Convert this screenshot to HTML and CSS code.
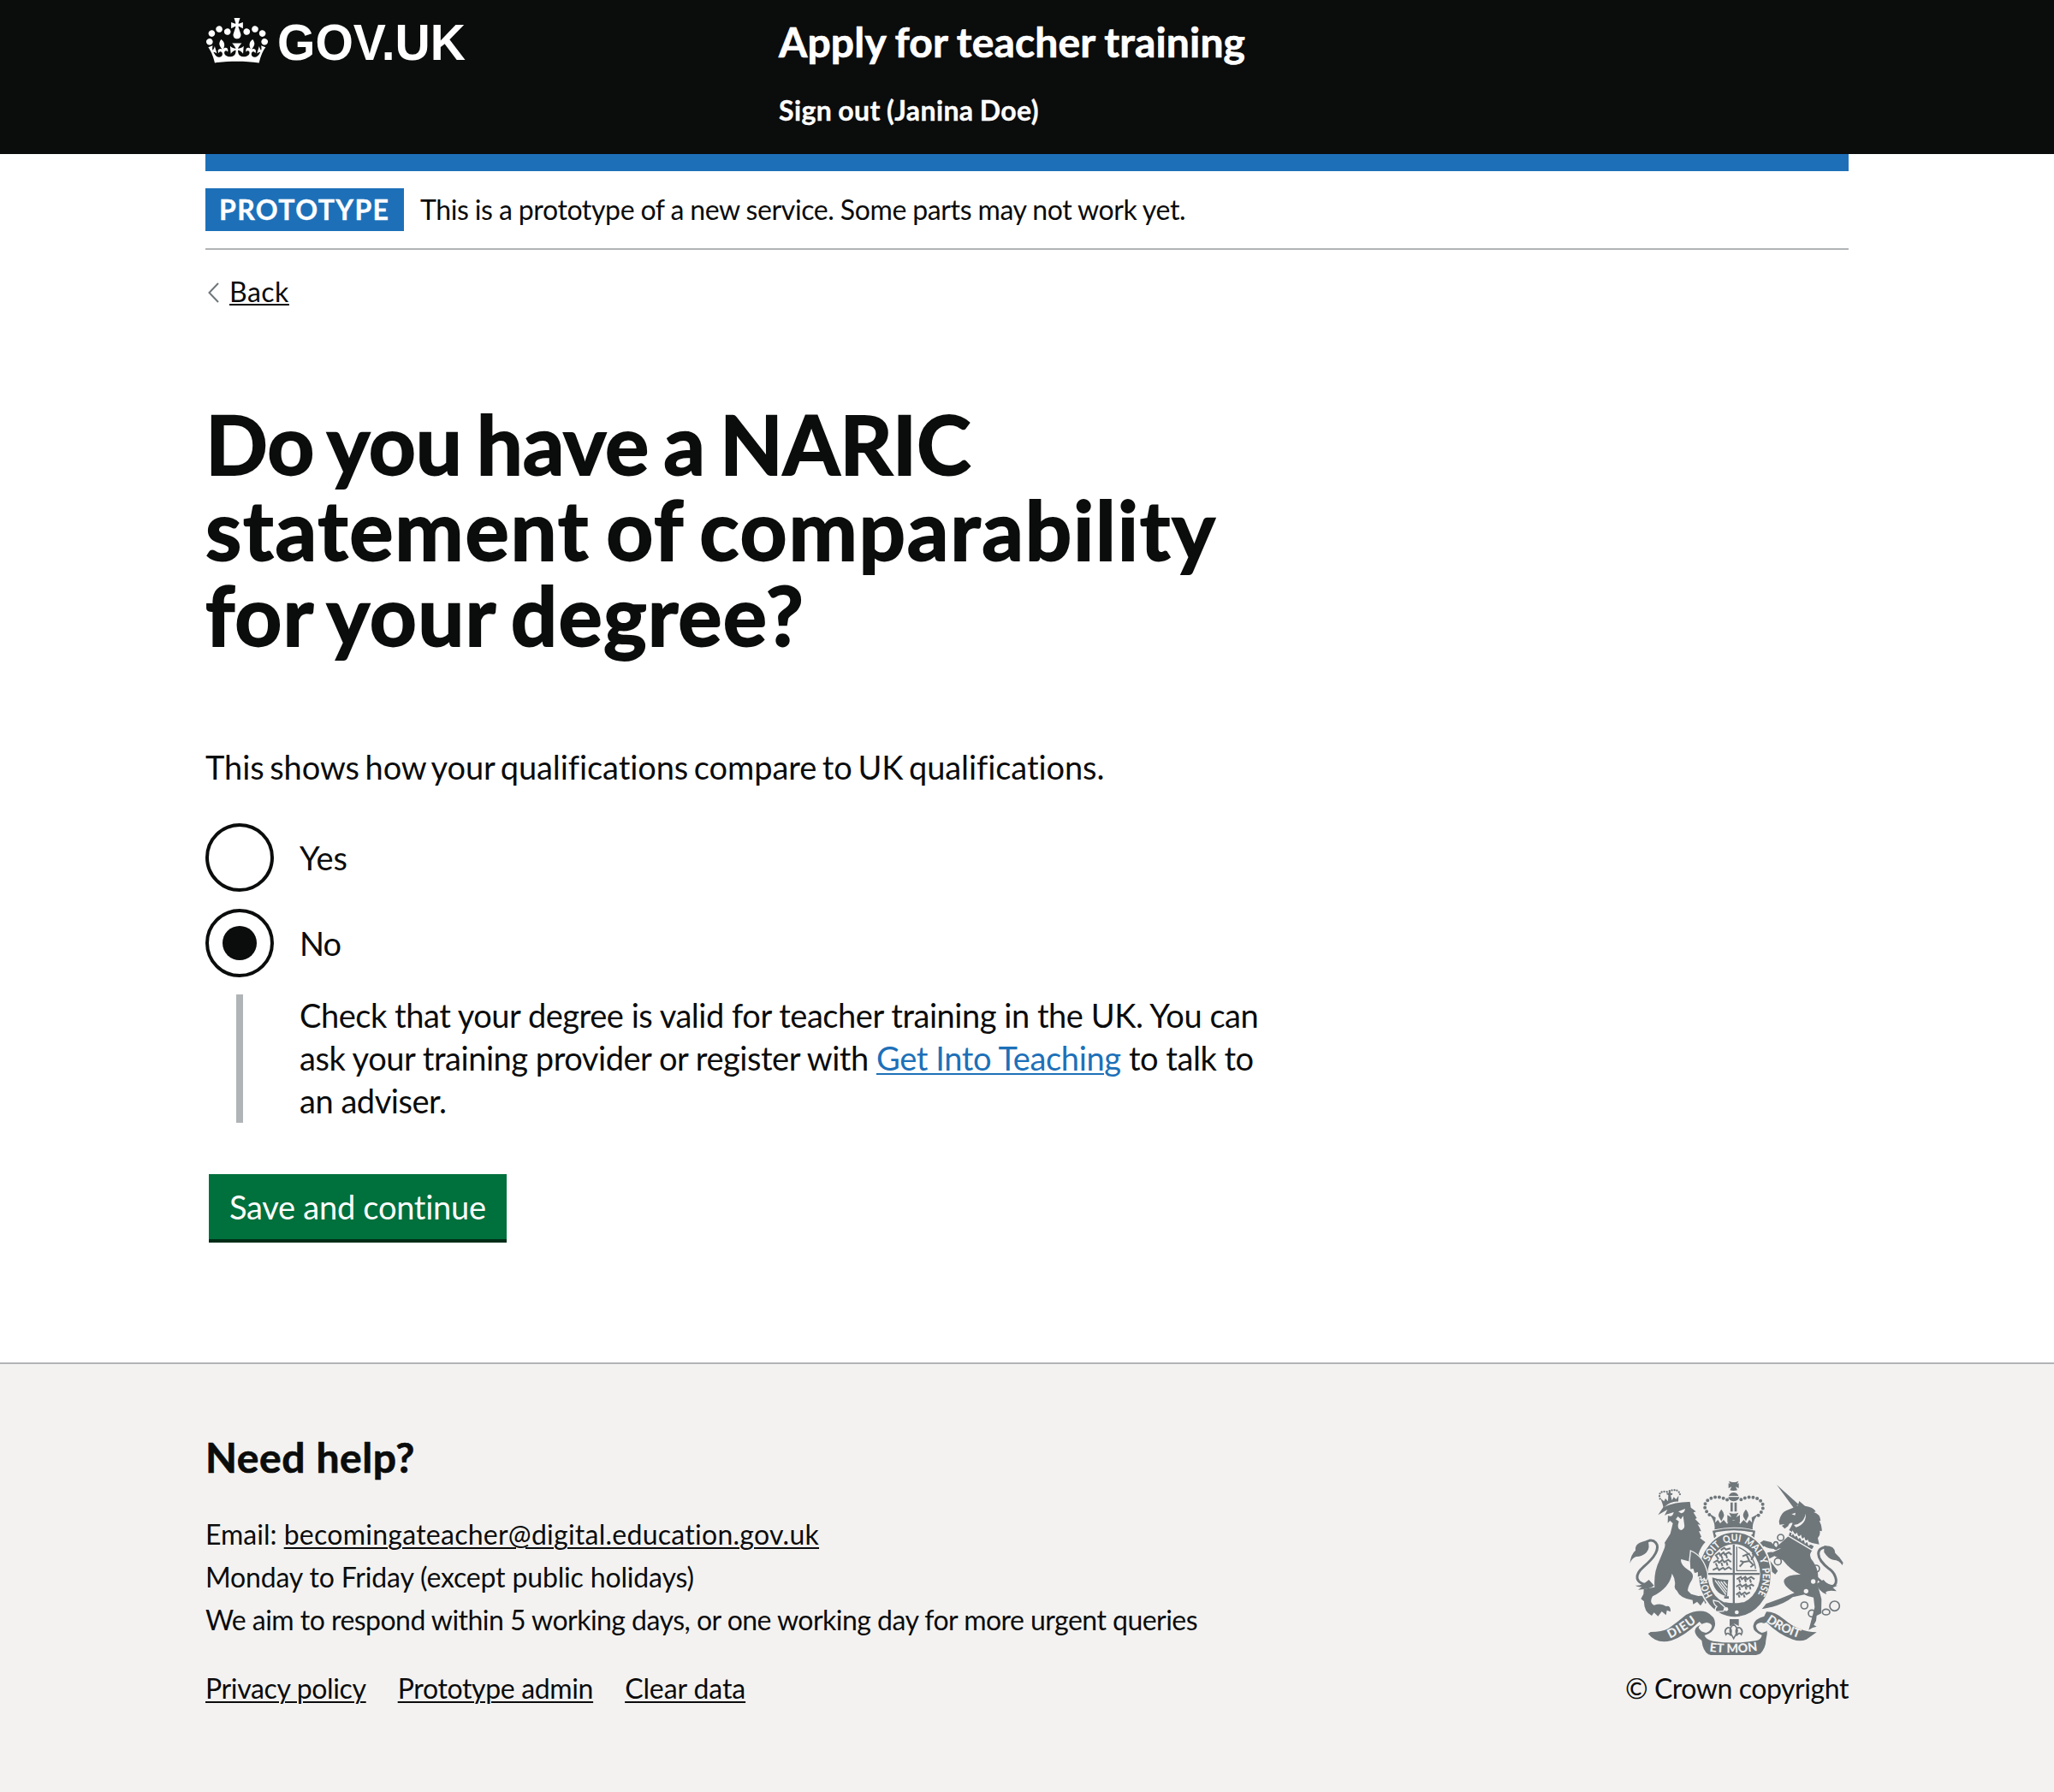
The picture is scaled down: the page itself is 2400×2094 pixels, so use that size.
FILE: index.html
```html
<!DOCTYPE html>
<html lang="en">
<head>
<meta charset="utf-8">
<title>Do you have a NARIC statement of comparability for your degree? - Apply for teacher training - GOV.UK</title>
<link rel="stylesheet" href="styles.css">
</head>
<body>
<header class="header">
  <div class="container header-row">
    <a class="logo" href="#">
      <svg class="crown" viewBox="0 0 132 97" aria-hidden="true"><path fill="currentColor" fill-rule="evenodd" d="M25 30.2c3.5 1.5 7.7-.2 9.1-3.7 1.5-3.6-.2-7.8-3.9-9.2-3.6-1.4-7.6.3-9.1 3.9-1.4 3.5.3 7.5 3.9 9zM9 39.5c3.6 1.5 7.8-.2 9.2-3.7 1.5-3.6-.2-7.8-3.9-9.1-3.6-1.5-7.6.2-9.1 3.8-1.4 3.5.3 7.5 3.8 9zM4.4 57.2c3.5 1.5 7.7-.2 9.1-3.8 1.5-3.6-.2-7.7-3.9-9.1-3.5-1.5-7.6.3-9.1 3.8-1.4 3.5.3 7.6 3.9 9.1zm38.3-21.4c3.5 1.5 7.7-.2 9.1-3.8 1.5-3.6-.2-7.7-3.9-9.1-3.6-1.5-7.6.3-9.1 3.8-1.3 3.6.4 7.7 3.9 9.1zm64.4-5.6c-3.6 1.5-7.8-.2-9.1-3.7-1.5-3.6.2-7.8 3.8-9.2 3.6-1.4 7.7.3 9.2 3.9 1.3 3.5-.4 7.5-3.9 9zm15.9 9.3c-3.6 1.5-7.7-.2-9.1-3.7-1.5-3.6.2-7.8 3.7-9.1 3.6-1.5 7.7.2 9.2 3.8 1.5 3.5-.3 7.5-3.8 9zm4.7 17.7c-3.6 1.5-7.8-.2-9.2-3.8-1.5-3.6.2-7.7 3.9-9.1 3.6-1.5 7.7.3 9.2 3.8 1.3 3.5-.4 7.6-3.9 9.1zM89.3 35.8c-3.6 1.5-7.8-.2-9.2-3.8-1.4-3.6.2-7.7 3.9-9.1 3.6-1.5 7.7.3 9.2 3.8 1.4 3.6-.3 7.7-3.9 9.1zM69.7 17.7l8.9 4.7V9.3l-8.9 2.8c-.2-.3-.5-.6-.9-.9L72.4 0H59.6l3.5 11.2c-.3.3-.6.5-.9.9l-8.8-2.8v13.1l8.8-4.7c.3.3.6.7.9.9l-5 15.4v.1c-.2.8-.4 1.6-.4 2.4 0 4.1 3.1 7.5 7 8.1h.2c.3 0 .7.1 1 .1.4 0 .7 0 1-.1h.2c4-.6 7.1-4.1 7.1-8.1 0-.8-.1-1.7-.4-2.4V34l-5.1-15.4c.4-.2.7-.6 1-.9zM66 92.8c16.9 0 32.8 1.1 47.1 3.2 4-16.9 8.9-26.7 14-33.5l-9.6-3.4c1 4.9 1.1 7.2 0 10.2-1.5-1.4-3-4.3-4.2-8.7L108.6 76c2.8-2 5-3.2 7.5-3.3-4.4 9.4-10 11.9-13.6 11.2-4.3-.8-6.3-4.6-5.6-7.9 1-4.7 5.7-5.9 8-.5 4.3-8.7-3-11.4-7.6-8.8 7.1-7.2 7.9-13.5 2.1-21.1-8 6.1-8.1 12.3-4.5 20.8-4.7-5.4-12.1-2.5-9.5 6.2 3.4-5.2 7.9-2 7.2 3.1-.6 4.3-6.4 7.8-13.5 7.2-10.3-.9-10.9-8-11.2-13.8 2.5-.5 7.1 1.8 11 7.3L80.2 60c-4.1 4.4-8 5.3-12.3 5.4 1.4-4.4 8-11.6 8-11.6H55.5s6.4 7.2 7.9 11.6c-4.2-.1-8-1-12.3-5.4l1.4 16.4c3.9-5.5 8.5-7.7 10.9-7.3-.3 5.8-.9 12.8-11.1 13.8-7.2.6-12.9-2.9-13.5-7.2-.7-5 3.8-8.3 7.1-3.1 2.7-8.7-4.6-11.6-9.4-6.2 3.7-8.5 3.6-14.7-4.6-20.8-5.8 7.6-5 13.9 2.2 21.1-4.7-2.6-11.9.1-7.7 8.8 2.3-5.5 7.1-4.2 8.1.5.7 3.3-1.3 7.1-5.7 7.9-3.5.7-9-1.8-13.5-11.2 2.5.1 4.7 1.3 7.5 3.3l-4.7-15.4c-1.2 4.4-2.7 7.2-4.3 8.7-1.1-3-.9-5.3 0-10.2l-9.5 3.4c5 6.9 9.9 16.7 14 33.5 14.8-2.1 30.8-3.2 47.7-3.2z"/></svg>
      <svg class="wordmark" viewBox="0 0 222 60"><text x="0" y="49" textLength="220" lengthAdjust="spacingAndGlyphs">GOV.UK</text></svg>
    </a>
    <div class="header-content">
      <a class="service-name" href="#">Apply for teacher training</a>
      <a class="sign-out" href="#">Sign out (Janina Doe)</a>
    </div>
  </div>
</header>

<div class="container">
  <div class="phase-banner">
    <strong class="tag">PROTOTYPE</strong>
    <span class="phase-text">This is a prototype of a new service. Some parts may not work yet.</span>
  </div>
  <a class="back" href="#">
    <svg class="chevron" viewBox="0 0 14 24" aria-hidden="true"><path d="M13 1 2.500 12 13 23" fill="none" stroke="#6f777b" stroke-width="2"/></svg>
    <span class="back-text">Back</span>
  </a>

  <main class="main">
    <h1 class="title">
      <span class="title-line title-line-1">Do you have a NARIC</span>
      <span class="title-line title-line-2">statement of comparability</span>
      <span class="title-line title-line-3">for your degree?</span>
    </h1>
    <p class="intro">This shows how your qualifications compare to UK qualifications.</p>
    <div class="radios">
      <label class="radio"><span class="dial"></span><span class="radio-label">Yes</span></label>
      <label class="radio"><span class="dial dial-on"></span><span class="radio-label radio-no">No</span></label>
      <div class="conditional">
        <p class="advice">Check that your degree is valid for teacher training in the UK. You can<br>ask your training provider or register with <a class="link" href="#">Get Into Teaching</a> to talk to<br>an adviser.</p>
      </div>
    </div>
    <button class="button" type="button">Save and continue</button>
  </main>
</div>

<footer class="footer">
  <div class="container footer-row">
    <div class="support">
      <h2 class="help">Need help?</h2>
      <ul class="contact">
        <li>Email: <a class="email" href="#">becomingateacher@digital.education.gov.uk</a></li>
        <li class="hours">Monday to Friday (except public holidays)</li>
        <li class="response">We aim to respond within 5 working days, or one working day for more urgent queries</li>
      </ul>
      <nav class="footer-links"><a href="#">Privacy policy</a><a href="#">Prototype admin</a><a class="clear" href="#">Clear data</a></nav>
    </div>
    <a class="copyright" href="#">
      <svg class="arms" viewBox="42 30 750 612" aria-hidden="true">
        <defs>
          <path id="garter" d="M342 445A98 118 0 1 1 480 445"/>
          <path id="scroll-left" d="M184 584Q236 560 290 516"/>
          <path id="scroll-right" d="M520 524Q578 566 650 586"/>
          <path id="scroll-mid" d="M322 629Q408 640 496 626"/>
        </defs>
        <g class="ink">
          <!-- central crown -->
          <path d="M390 32l12 4h12l10-4-5 11 6-4v18l-11-5 6 12q-14 4-26 0l6-12-11 5V39l6 4zM390 84a18 18 0 0 1 34 0zM388 88h39q-2 13-20 15-17-2-19-15zM396 107h8v32h-8zM410 107h8v32h-8z"/>
          <path d="M364 131q14 17 7 28-7 14-7 14t-8-14q-6-11 8-28zM450 131q14 17 7 28-7 14-7 14t-8-14q-6-11 8-28zM391 143q16 6 33 0l-8 16 13-8v26l-22-8-22 8v-26l14 8z"/>
          <path d="M324 148l20 12-2 18 10-10 8 12 12-12 12 14 8-12h30l8 12 12-14 12 12 8-12 10 10-2-18 22-12q-22 30-18 54-66-16-134 0 4-24-16-52z"/>
          <path d="M333 206q74-18 150 0l-4 26q-8-10-12-9 18-14-4-13-56-10-110 0-18 0-6 14l-8 9z"/>
          <g class="pearls"><path d="M322 150C276 108 338 68 388 100"/><path d="M494 152C540 108 478 68 428 100"/></g>
          <!-- lion -->
          <g class="dots"><path d="M149 94Q140 64 174 70Q216 52 220 84"/></g>
          <path d="M158 113l-7-20 12 10 5-10 9 10 1-22-6-2 1-6 6 1 1-7h6v7l7 0-1 6-6 2 5 18 6-12 8 8 9-13-1 21q-26-2-52 21z"/>
          <path d="M142 151l18-27q44-20 94-19l3 20 18 14-9 3 12 20-6 3 19 20-10-1q8 12 12 24l-8 0 9 19-5 5 19 14q-16 16-24 42l12 26q30 26 22 56l-7 5-6-11-9 10-2-17-14 4 1-16-11 3-5-16-13 2 7-18-36-10q-5 18 26 38 22 12 12 34-14 22-15 38l12 12 25 7q30-3 35 14l-10 14-5-12-12 18-12-14-14 9-2-15q-44-6-55-33-7-4-8-14 6-22-9-46-8 50-68 80-13 22 5 31 25-9 42 4 17-4 16 19l-13-5-3 17-15-13-13 17-14-13-8 11q-28-14-27-50l-11-9 9-17 1-18 38-6q-4-52 17-94l16-39q6-15 2-23l20-31 9-37-10-9-8 8 1-31-12 4 10-20z"/>
          <path class="tail" d="M115 398C55 390 60 360 92 332C130 300 150 268 134 248C122 234 105 240 94 252"/>
          <path d="M43 321q4-33 20-46-4-28 43-34 10 26-5 42-14 14-36 14-16 6-22 24zM62 398q20 4 48-20l18 20q-10 12-56 15l14-10q-14 2-24-5z"/>
          <!-- unicorn -->
          <path d="M558 45l76 68-15 15zM632 118l5-16 20 17q30 4 38 20l-7 2q22 6 24 30l-5 1q11 16 9 36l-7-2q3 16-7 26l5 22q-52-6-106-50 8-12 13-25-12-3-16 11l-12 9-10-10 10-6-18 2-2-12q6-30 26-38 14-4 40-17z"/>
          <path d="M600 224l84 50q-14 12-6 30 34 42 22 88 10 34 15 54l-1 50-16 8-2 18-8 14 10 6-14 4-14 8 12-44 9-36-4-34q-20-2-32-10l-41 9q-30 24-72 34l-36 8 15-19q48-16 99-38-42-26-36-46 12-20 58-18-36-16-62-50l-30-15-20 10 32 42-9 12-26-20-16-38q8-24 34-20 14-6 29-13-36 6-60-8l-14 8-6-16 18-12 26 6 18 18z"/>
          <path class="tail" d="M700 372C770 440 785 370 742 340C690 300 697 266 731 263"/>
          <path d="M724 259q38-2 39 25 18 16 28 34l-3 9q-10-18-32-19-18-4-32-27zM697 392l25-14q16 22 50 20-10 6-20 5l16 15q-28-5-38 3l2 8q-26-10-35-37z"/>
          <g class="chain"><ellipse cx="572" cy="230" rx="11" ry="11"/><ellipse cx="555" cy="258" rx="8" ry="13"/><circle cx="562" cy="314" r="12"/><circle cx="696" cy="339" r="12"/><circle cx="655" cy="468" r="12"/><circle cx="681" cy="496" r="12"/><ellipse cx="731" cy="491" rx="13" ry="10"/><circle cx="761" cy="470" r="17"/></g>
          <!-- garter and motto scroll -->
          <ellipse class="edge" cx="411" cy="360" rx="128" ry="150"/>
          <path d="M393 516h32v24l-16-8-16 10z"/>
          <path d="M116 561q40 0 62-12 34-24 62-48 40-20 72-10 36 18 29 50-6 24-36 32 4 14 29 20 76 12 150-1 20-4 22-20-34-12-30-34 4-24 38-32l8-16q30 0 64 28 48 42 112 44l-36 25q-22 9-48 0-50-18-92-60l-10 4q14 14 12 38-2 10-4 22 0 24-19 46-30 12-92 12-60 0-90-9-20-12-24-49-24-18-24-34 2-16 26-22l-10-10q-54 52-98 66-52 14-82-24z"/>
        </g>
        <g class="lily"><path d="M407 534q-20 18-9 34l9 16 9-16q11-16-9-34zM398 566q4-22-12-20-14 8-6 24 6-10 18 4M416 566q-4-22 12-20 14 8 6 24-6-10-18 4"/></g>
        <g class="paper">
          <ellipse cx="408" cy="359" rx="92" ry="106"/>
          <path d="M169 150l28-9q-4 18-18 13zM213 139l24-10q-2 15-14 16zM204 166l8-10 10 10 8-12 4 30q3 15-10 20-13-2-12-18l3-13z"/>
          <path d="M610 148l14-5-2 9zM660 146q-8 36-42 40l8 8q36-12 34-48z"/>
          <path d="M284 546q4-13 28-18 16 2 19 12-3 18-21 24-18-2-26-18zM532 546q-4-13-28-18-16 2-19 12 3 18 21 24 18-2 26-18z"/>
          <circle cx="381" cy="481" r="7"/><circle cx="418" cy="492" r="7"/><circle cx="661" cy="418" r="8"/><circle cx="686" cy="384" r="8"/>
        </g>
        <path class="collar" d="M603 208l88 52-9 14-84-50zM610 222l4-12 8 14 6-8 6 16 8-8 4 16 8-8 4 16 8-8 4 16 8-4"/>
        <path class="buckle" d="M336 450l18 4 22 20-4 14-26 2q-8-8 2-18-12-8-12-22z"/>
        <g class="ink">
          <path d="M404 254h7v208h-7zM317 354h181v7H317z"/>
          <path d="M332 370q26 10 56 8l-4 58q-50-10-52-66zM374 436h16v8h-16zM374 456q34 8 70 0l-16 14q-24 4-42-4z"/>
        </g>
        <g class="details">
          <path d="M342 294l14-10 4 8 12-10 4 8 14-8 10 8M346 294l8 12M362 290l6 14M380 288l4 14M336 318l14-8 6 8 12-10 6 8 14-8 10 8M344 320l6 12M364 318l4 12M382 316l4 12M334 344l16-8 6 8 14-8 6 6 14-8 10 8M362 274l12-8 6 6 16-4"/>
          <path d="M418 376l14-8 4 8 12-8 6 8 14-8 12 8M426 376l4 12M446 374l4 12M464 376l4 12M416 402l14-8 6 8 14-8 6 8 14-8 8 6M426 402l4 12M448 400l4 12M464 402l2 10M416 430l12-8 6 8 12-8 6 6 12-6M424 430l4 10M442 430l4 10"/>
          <path d="M428 332l14-16-12-4M442 316l20-4 14 14-10 8M462 312l-10-22-14 6M452 290l12-4M468 308q14-14 4-24"/>
          <path class="frame" d="M418 262v84h70M424 264q54 24 60 76"/>
        </g>
        <g class="strings"><path d="M342 380l38 50M352 382l30 40M362 384l22 28M372 384l12 14"/></g>
        <g class="motto">
          <text><textPath href="#garter" startOffset="14" textLength="68" lengthAdjust="spacingAndGlyphs">HON</textPath></text>
          <text><textPath href="#garter" startOffset="138" textLength="70" lengthAdjust="spacingAndGlyphs">SOIT</textPath></text>
          <text><textPath href="#garter" startOffset="222" textLength="58" lengthAdjust="spacingAndGlyphs">QUI</textPath></text>
          <text><textPath href="#garter" startOffset="293" textLength="68" lengthAdjust="spacingAndGlyphs">MAL</textPath></text>
          <text><textPath href="#garter" startOffset="370">Y</textPath></text>
          <text><textPath href="#garter" startOffset="406" textLength="94" lengthAdjust="spacingAndGlyphs">PENSE</textPath></text>
          <text class="large"><textPath href="#scroll-left" textLength="110">DIEU</textPath></text>
          <text class="large"><textPath href="#scroll-mid" textLength="170">ET MON</textPath></text>
          <text class="large"><textPath href="#scroll-right" textLength="130">DROIT</textPath></text>
        </g>
        <!-- lion's forepaw resting on the garter -->
        <path class="paw" d="M256 276q46 18 60 80l0 16-6 12-6-11-10 8-2-15-13 4 1-16-11 3-5-16-10 2-2-30z"/>
      </svg>
      <span class="copyright-text">© Crown copyright</span>
    </a>
  </div>
</footer>
</body>
</html>
```

FILE: styles.css
```css
* { box-sizing: border-box; }
body { margin: 0; background: #fff; color: #0b0c0c; font-family: Lato, "Liberation Sans", sans-serif; font-size: 38px; line-height: 50px; }
a { color: inherit; text-decoration: none; white-space: nowrap; }
h1, h2, p, ul { margin: 0; padding: 0; }
.container { width: 1920px; margin: 0 auto; }

.header { height: 180px; background: #0b0c0c; color: #fff; }
.header-row { display: flex; }
.logo { display: flex; width: 670px; padding-top: 21px; }
.crown { width: 72px; height: 53px; margin-left: 1px; }
.wordmark { width: 222px; height: 60px; margin-left: 11px; overflow: visible; }
.wordmark text { font: bold 59px "Liberation Sans", sans-serif; fill: #fff; }
.header-content { display: flex; flex-direction: column; padding-top: 19px; }
.service-name { font-size: 48px; line-height: 60px; font-weight: 700; letter-spacing: .16px; word-spacing: -1px; -webkit-text-stroke: .7px; }
.sign-out { margin-top: 25px; font-size: 32px; font-weight: 700; letter-spacing: .4px; word-spacing: -1px; -webkit-text-stroke: .4px; }

.phase-banner { display: flex; gap: 19px; padding: 20px 0; border-top: 20px solid #1d70b8; border-bottom: 2px solid #b1b4b6; font-size: 32px; line-height: 50px; }
.tag { width: 232px; height: 50px; padding-left: 16px; background: #1d70b8; color: #fff; letter-spacing: 1.4px; -webkit-text-stroke: .4px; }
.phase-text { letter-spacing: -.38px; word-spacing: -.5px; }
.back { display: flex; align-items: center; width: max-content; height: 50px; margin-top: 24px; font-size: 32px; }
.chevron { width: 14px; height: 24px; margin: 2px 12px 0 2px; }
.back-text { letter-spacing: .5px; text-decoration: underline; text-decoration-thickness: 2px; text-underline-offset: 2px; }

.main { height: 1226px; padding-top: 102px; }
.title { font-size: 96px; line-height: 100px; font-weight: 700; word-spacing: -6px; -webkit-text-stroke: 1.8px; }
.title-line { display: block; white-space: nowrap; }
.title-line-1 { letter-spacing: -.2px; }
.title-line-2 { letter-spacing: 1.75px; }
.title-line-3 { letter-spacing: 1.15px; }
.intro { margin-top: 103px; letter-spacing: -.08px; word-spacing: -3px; }
.radios { margin-top: 41px; }
.radio { display: flex; height: 80px; margin-bottom: 20px; }
.dial { display: flex; align-items: center; justify-content: center; width: 80px; height: 80px; border: 4px solid #0b0c0c; border-radius: 50%; }
.dial-on::after { content: ""; width: 40px; height: 40px; border-radius: 50%; background: #0b0c0c; }
.radio-label { padding-left: 30px; line-height: 80px; letter-spacing: -.1px; }
.radio-no { letter-spacing: -.9px; }
.conditional { display: flow-root; height: 150px; margin-left: 36px; padding-left: 66px; border-left: 8px solid #b1b4b6; }
.advice { margin-top: -1px; letter-spacing: -.46px; white-space: nowrap; }
.link { color: #1d70b8; letter-spacing: -.37px; text-decoration: underline; text-decoration-thickness: 2px; text-underline-offset: 3px; }
.button { display: block; width: 348px; height: 76px; margin: 60px 0 0 4px; padding: 0 0 0 24px; border: 0; background: #00703c; box-shadow: 0 4px #002d18; color: #fff; font: inherit; line-height: 76px; letter-spacing: -.27px; text-align: left; }

.footer { height: 502px; border-top: 2px solid #b1b4b6; background: #f3f2f1; font-size: 32px; }
.footer-row { display: flex; justify-content: space-between; align-items: flex-end; height: 404px; }
.help { font-size: 48px; line-height: 50px; letter-spacing: .6px; -webkit-text-stroke: .7px; }
.contact { margin-top: 40px; list-style: none; white-space: nowrap; }
.email { letter-spacing: .26px; }
.hours { letter-spacing: -.16px; }
.response { letter-spacing: -.53px; }
.footer-links { display: flex; gap: 37px; margin-top: 30px; letter-spacing: -.35px; }
.footer-links .clear { letter-spacing: -.09px; }
.email, .footer-links a { text-decoration: underline; text-decoration-thickness: 2px; text-underline-offset: 3px; }
.copyright { display: flex; flex-direction: column; align-items: center; width: 261px; }
.arms { width: 250px; height: 204px; margin: 0 2px 14px 0; }
.copyright-text { letter-spacing: -.43px; }

.ink, .buckle, .paw { fill: #6f777b; }
.buckle, .paw { stroke: #f3f2f1; stroke-width: 4; }
.paper { fill: #f3f2f1; }
.pearls path { fill: none; stroke: #6f777b; stroke-width: 12; stroke-linecap: round; stroke-dasharray: 0 14.5; }
.dots path { fill: none; stroke: #6f777b; stroke-width: 7; stroke-linecap: round; stroke-dasharray: 0 9; }
.ink .tail { fill: none; stroke: #6f777b; stroke-width: 9; }
.chain { fill: none; stroke: #6f777b; stroke-width: 5; }
.edge { stroke: #f3f2f1; stroke-width: 5; }
.lily { fill: #f3f2f1; stroke: #6f777b; stroke-width: 5; }
.collar { fill: #6f777b; stroke: #f3f2f1; stroke-width: 4; }
.details { fill: none; stroke: #6f777b; stroke-width: 6; }
.details .frame { stroke-width: 4; }
.strings { fill: none; stroke: #f3f2f1; stroke-width: 4; }
.motto { fill: #f3f2f1; font: 900 35px Lato, sans-serif; }
.motto .large { font-size: 43px; }
```
